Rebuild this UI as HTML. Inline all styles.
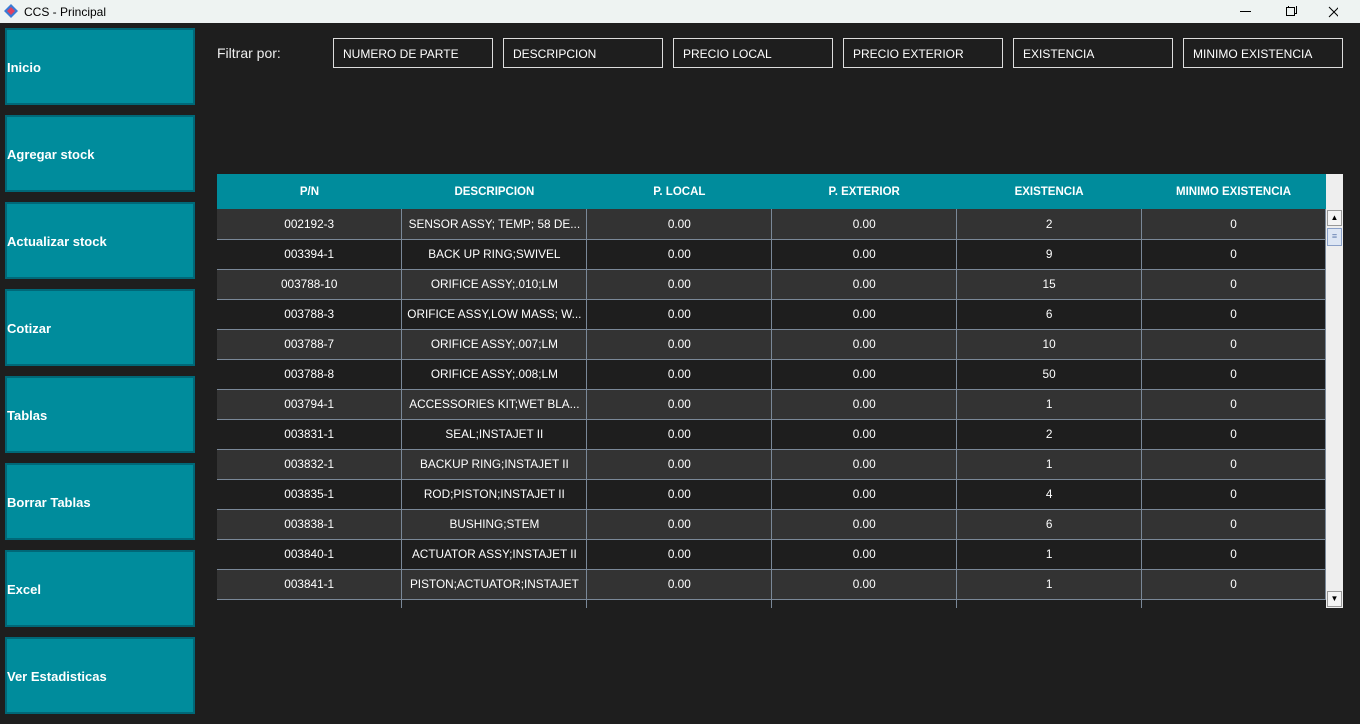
<!DOCTYPE html>
<html><head><style>
*{margin:0;padding:0;box-sizing:border-box}
body{width:1360px;height:724px;background:#1e1e1e;font-family:"Liberation Sans",Arial,sans-serif;position:relative;overflow:hidden}
.tb{position:absolute;left:0;top:0;width:1360px;height:23px;background:#eef3f2;color:#000;font-size:12px}
.tb span{position:absolute;top:5px;left:24px}
.btn{position:absolute;left:5px;width:190px;height:77px;background:#008c9c;border:2px solid #006878;color:#fff;font-weight:bold;font-size:13px;display:flex;align-items:center;padding-top:2px}
.flt{position:absolute;top:38px;width:160px;height:30px;border:1px solid #ddd;color:#fff;font-size:12px;padding:8px 0 0 9px}
table{position:absolute;left:217px;top:174px;width:1109px;border-collapse:collapse;font-size:11.8px;color:#fff}
th{background:#008c9c;height:35px;font-size:11.5px;font-weight:bold}
td{height:30px;text-align:center;border:1px solid #7a8898;border-top:none;white-space:nowrap;overflow:hidden}
tr:nth-child(odd) td{background:#333}
tr:nth-child(even) td{background:#1e1e1e}
td:first-child{border-left:none}
</style></head><body>
<div class="tb"><svg style="position:absolute;left:4px;top:4px" width="14" height="14"><polygon points="7,0 14,7 7,14 0,7" fill="#3a7bd5"/><polygon points="7,3 11,7 7,11 3,7" fill="#e04060"/></svg><span>CCS - Principal</span>
<svg style="position:absolute;left:1238px;top:6px" width="100" height="12"><line x1="2" y1="5.5" x2="13" y2="5.5" stroke="#000"/><rect x="48.5" y="1.5" width="8" height="8" fill="none" stroke="#000"/><path d="M50.5 1.5V-0.5H58.5V7.5H56.5" fill="none" stroke="#000"/><path d="M91 1L101 11M101 1L91 11" stroke="#000"/></svg></div>
<div class="btn" style="top:28px">Inicio</div>
<div class="btn" style="top:115px">Agregar stock</div>
<div class="btn" style="top:202px">Actualizar stock</div>
<div class="btn" style="top:289px">Cotizar</div>
<div class="btn" style="top:376px">Tablas</div>
<div class="btn" style="top:463px">Borrar Tablas</div>
<div class="btn" style="top:550px">Excel</div>
<div class="btn" style="top:637px">Ver Estadisticas</div>
<div style="position:absolute;left:217px;top:45px;color:#eee;font-size:14px">Filtrar por:</div>
<div class="flt" style="left:333px">NUMERO DE PARTE</div>
<div class="flt" style="left:503px">DESCRIPCION</div>
<div class="flt" style="left:673px">PRECIO LOCAL</div>
<div class="flt" style="left:843px">PRECIO EXTERIOR</div>
<div class="flt" style="left:1013px">EXISTENCIA</div>
<div class="flt" style="left:1183px">MINIMO EXISTENCIA</div>
<div style="position:absolute;left:217px;top:208px;width:1109px;height:400px;background:#1e1e1e"></div>
<table>
<colgroup><col width="185"><col width="185"><col width="185"><col width="185"><col width="185"><col width="184"></colgroup>
<thead><tr><th>P/N</th><th>DESCRIPCION</th><th>P. LOCAL</th><th>P. EXTERIOR</th><th>EXISTENCIA</th><th>MINIMO EXISTENCIA</th></tr></thead>
<tbody>
<tr><td>002192-3</td><td>SENSOR ASSY; TEMP; 58 DE...</td><td>0.00</td><td>0.00</td><td>2</td><td>0</td></tr>
<tr><td>003394-1</td><td>BACK UP RING;SWIVEL</td><td>0.00</td><td>0.00</td><td>9</td><td>0</td></tr>
<tr><td>003788-10</td><td>ORIFICE ASSY;.010;LM</td><td>0.00</td><td>0.00</td><td>15</td><td>0</td></tr>
<tr><td>003788-3</td><td>ORIFICE ASSY,LOW MASS; W...</td><td>0.00</td><td>0.00</td><td>6</td><td>0</td></tr>
<tr><td>003788-7</td><td>ORIFICE ASSY;.007;LM</td><td>0.00</td><td>0.00</td><td>10</td><td>0</td></tr>
<tr><td>003788-8</td><td>ORIFICE ASSY;.008;LM</td><td>0.00</td><td>0.00</td><td>50</td><td>0</td></tr>
<tr><td>003794-1</td><td>ACCESSORIES KIT;WET BLA...</td><td>0.00</td><td>0.00</td><td>1</td><td>0</td></tr>
<tr><td>003831-1</td><td>SEAL;INSTAJET II</td><td>0.00</td><td>0.00</td><td>2</td><td>0</td></tr>
<tr><td>003832-1</td><td>BACKUP RING;INSTAJET II</td><td>0.00</td><td>0.00</td><td>1</td><td>0</td></tr>
<tr><td>003835-1</td><td>ROD;PISTON;INSTAJET II</td><td>0.00</td><td>0.00</td><td>4</td><td>0</td></tr>
<tr><td>003838-1</td><td>BUSHING;STEM</td><td>0.00</td><td>0.00</td><td>6</td><td>0</td></tr>
<tr><td>003840-1</td><td>ACTUATOR ASSY;INSTAJET II</td><td>0.00</td><td>0.00</td><td>1</td><td>0</td></tr>
<tr><td>003841-1</td><td>PISTON;ACTUATOR;INSTAJET</td><td>0.00</td><td>0.00</td><td>1</td><td>0</td></tr>
</tbody></table>
<svg style="position:absolute;left:400px;top:598px" width="930" height="10"><g stroke="#7a8898"><line x1="1.5" y1="0" x2="1.5" y2="10"/><line x1="186.5" y1="0" x2="186.5" y2="10"/><line x1="371.5" y1="0" x2="371.5" y2="10"/><line x1="556.5" y1="0" x2="556.5" y2="10"/><line x1="741.5" y1="0" x2="741.5" y2="10"/></g></svg>
<div style="position:absolute;left:1326px;top:174px;width:17px;height:434px;background:#eee"></div>
<div style="position:absolute;left:1327px;top:210px;width:15px;height:16px;background:#f4f4f4;border:1px solid #999;font-size:8px;text-align:center;line-height:14px">▲</div>
<div style="position:absolute;left:1327px;top:228px;width:15px;height:18px;background:#dde6f4;border:1px solid #8aa0c8;font-size:9px;text-align:center;line-height:14px;color:#6680b0">≡</div>
<div style="position:absolute;left:1327px;top:591px;width:15px;height:16px;background:#f4f4f4;border:1px solid #999;font-size:8px;text-align:center;line-height:14px">▼</div>
</body></html>
